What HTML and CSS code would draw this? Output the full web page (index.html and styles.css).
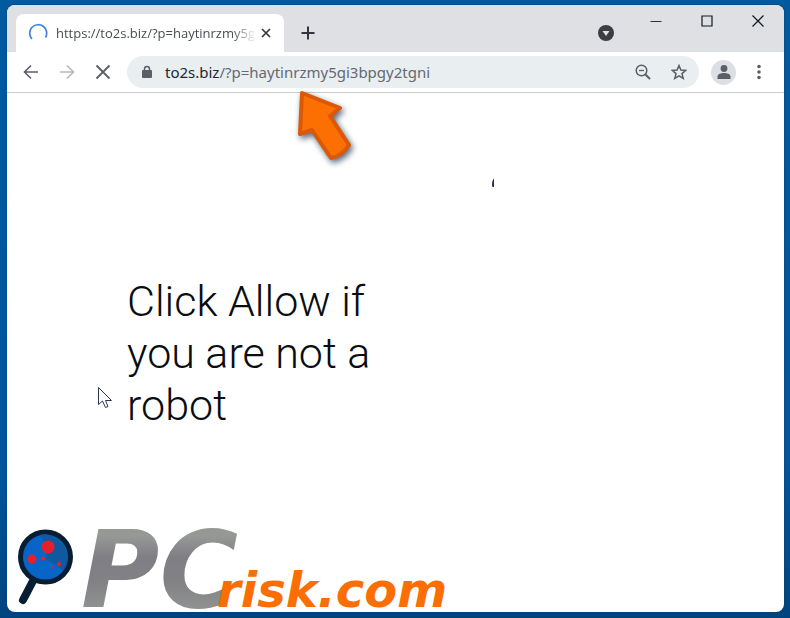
FILE: index.html
```html
<!DOCTYPE html>
<html lang="en">
<head>
<meta charset="utf-8">
<meta name="viewport" content="width=device-width, initial-scale=1">
<title>to2s.biz</title>
<link rel="stylesheet" href="styles.css">
</head>
<body>
<div class="window">
  <header class="tab-strip">
    <div class="tab">
      <svg class="spinner" viewBox="0 0 20 20" width="20" height="20" aria-hidden="true"><path d="M4 16A8.500 8.500 0 1 1 17.500 14.500" fill="none" stroke="#3f83e6" stroke-width="1.700"/></svg>
      <span class="tab-title">https://to2s.biz/?p=haytinrzmy5g</span>
      <button class="icon-button tab-close" aria-label="Close tab"><svg viewBox="0 0 10 10" width="10" height="10"><path d="M1 1L9 9M9 1L1 9" stroke="#35363d" stroke-width="1.700"/></svg></button>
    </div>
    <button class="icon-button new-tab" aria-label="New tab"><svg viewBox="0 0 14 14" width="14" height="14"><path d="M7 .5V13.500M.5 7H13.500" stroke="#35343e" stroke-width="2"/></svg></button>
    <button class="icon-button tab-search" aria-label="Search tabs"><svg viewBox="0 0 16 16" width="16" height="16"><circle cx="8" cy="8" r="8" fill="#3c3d44"/><path d="M4.500 6H11.500L8 11Z" fill="#dee1e6"/></svg></button>
    <div class="window-controls">
      <button class="icon-button" aria-label="Minimize"><svg viewBox="0 0 12 12" width="12" height="12"><path d="M.5 6.500H11.500" stroke="#30323c"/></svg></button>
      <button class="icon-button" aria-label="Maximize"><svg viewBox="0 0 12 12" width="12" height="12"><path d="M1 1H11V11H1Z" fill="none" stroke="#111620" stroke-width="1.200"/></svg></button>
      <button class="icon-button" aria-label="Close"><svg viewBox="0 0 12 12" width="12" height="12"><path d="M.5.5L11.500 11.500M11.500.5L.5 11.500" stroke="#111620" stroke-width="1.200"/></svg></button>
    </div>
  </header>
  <nav class="toolbar" aria-label="Browser">
    <div class="history">
      <button class="icon-button" aria-label="Back"><svg viewBox="0 0 16 16" width="16" height="16"><path d="M15 8H2M8 1.500L1.500 8L8 14.500" fill="none" stroke="#5b5e65" stroke-width="1.600"/></svg></button>
      <button class="icon-button" aria-label="Forward"><svg viewBox="0 0 16 16" width="16" height="16"><path d="M1 8H14M8 1.500L14.500 8L8 14.500" fill="none" stroke="#b8babe" stroke-width="1.600"/></svg></button>
      <button class="icon-button" aria-label="Stop loading"><svg viewBox="0 0 16 16" width="16" height="16"><path d="M1.500 1.500L14.500 14.500M14.500 1.500L1.500 14.500" stroke="#5b5e65" stroke-width="1.800"/></svg></button>
    </div>
    <div class="address">
      <svg viewBox="0 0 12 14" width="12" height="14" aria-hidden="true"><rect x="1" y="5" width="10" height="8" rx="1" fill="#5b5e65"/><path d="M3.500 6V4A2.500 2.500 0 0 1 8.500 4V6" fill="none" stroke="#5b5e65" stroke-width="1.500"/></svg>
      <a class="url" href="#"><span class="host">to2s.biz</span>/?p=haytinrzmy5gi3bpgy2tgni</a>
      <button class="icon-button" aria-label="Zoom"><svg viewBox="0 0 16 16" width="16" height="16"><circle cx="6.500" cy="6.500" r="5.300" fill="none" stroke="#5b5e65" stroke-width="1.500"/><path d="M4 6.500H9" stroke="#5b5e65" stroke-width="1.300"/><path d="M10.200 10.200L15 15" stroke="#5b5e65" stroke-width="2"/></svg></button>
      <button class="icon-button" aria-label="Bookmark this page"><svg viewBox="0 0 16 16" width="16" height="16"><path d="M8 1.500L9.900 6L14.700 6.400L11 9.600L12.200 14.400L8 11.800L3.800 14.400L5 9.600L1.300 6.400L6.100 6Z" fill="none" stroke="#5b5e65" stroke-width="1.500"/></svg></button>
    </div>
    <button class="icon-button profile" aria-label="Profile"><svg viewBox="0 0 14 14" width="14" height="14"><circle cx="7" cy="3.500" r="3.400" fill="#5b5e65"/><path d="M.5 14V11.500C.5 9 4 8 7 8S13.500 9 13.500 11.500V14Z" fill="#5b5e65"/></svg></button>
    <button class="icon-button menu" aria-label="Menu"><svg viewBox="0 0 4 16" width="4" height="16"><g fill="#5b5e65"><circle cx="2" cy="2.500" r="1.800"/><circle cx="2" cy="8" r="1.800"/><circle cx="2" cy="13.500" r="1.800"/></g></svg></button>
  </nav>
  <main class="page">
    <h1 class="prompt">Click Allow if you are not a robot</h1>
    <svg class="fragment" viewBox="0 0 4 10" width="4" height="10" aria-hidden="true"><path d="M3 .5V9H1.500Q0 4 3 .5Z" fill="#252b51"/></svg>
    <svg class="arrow" viewBox="0 0 70 84" width="70" height="84" aria-hidden="true">
      <path d="M7 3L45 18L35 26L54 55Q47 66 36 68L17 40L5 44Z" fill="#fc6f03" stroke="#dc5805" stroke-width="4" stroke-linejoin="round"/>
    </svg>
    <svg class="cursor" viewBox="0 0 16 23" width="16" height="23" aria-hidden="true"><path d="M1.500 1.500V18.500L5.500 15L8.500 21.500L11 20.500L8.500 14.500H14.500Z" fill="#fff" stroke="#2a3850" stroke-width="1"/></svg>
    <div class="brand">
      <svg class="lens" viewBox="0 0 58 78" width="58" height="78" aria-hidden="true">
        <path d="M17 50L6 71" stroke="#071d31" stroke-width="8" stroke-linecap="round"/>
        <circle cx="28.500" cy="28" r="25" fill="#0765c8" stroke="#071d31" stroke-width="5"/>
        <path d="M22 6A23 23 0 0 1 46 42Q38 34 29 31Q32 15 22 6Z" fill="#1059a1"/>
        <g fill="#e4212b"><circle cx="31" cy="18" r="6.500"/><circle cx="15" cy="30" r="4.500"/><circle cx="26" cy="29.500" r="2"/><circle cx="42" cy="35" r="2"/><circle cx="35" cy="38.500" r="1.200"/></g>
      </svg>
      <svg class="wordmark" viewBox="0 0 380 84" width="380" height="84">
        <defs>
          <linearGradient id="steel" x1="0" y1="0" x2="0" y2="84" gradientUnits="userSpaceOnUse">
            <stop offset=".1" stop-color="#969896"/><stop offset=".35" stop-color="#7f7e84"/><stop offset=".65" stop-color="#828285"/><stop offset="1" stop-color="#929492"/>
          </linearGradient>
        </defs>
        <text class="brand-pc" x="6" y="79" fill="url(#steel)">PC</text>
        <text class="brand-risk" x="142" y="79" fill="#fa6e04">risk.com</text>
      </svg>
    </div>
  </main>
</div>
</body>
</html>
```
FILE: styles.css
```css
* { box-sizing: border-box; }
body {
  margin: 0;
  padding: 5px 6px 6px 7px;
  min-height: 100vh;
  display: flex;
  background: linear-gradient(#005a9f, #00559c 75%, #00447f);
  font-family: "Noto Sans", "Open Sans", sans-serif;
}
.window {
  flex: 1;
  min-width: 0;
  display: flex;
  flex-direction: column;
  border-radius: 8px;
  background: #fff;
  box-shadow: 0 0 2px #17395c;
}
.icon-button {
  display: grid;
  place-items: center;
  flex: none;
  padding: 0;
  border: 0;
  background: none;
}
.tab-strip {
  display: flex;
  align-items: flex-end;
  height: 47px;
  padding-left: 9px;
  border-radius: 8px 8px 0 0;
  background: #dee0e4;
}
.tab {
  display: flex;
  align-items: center;
  width: 268px;
  height: 38px;
  padding: 0 12px;
  border-radius: 8px 8px 0 0;
  background: #fff;
}
.spinner { flex: none; margin-right: 8px; }
.tab-title {
  flex: 1;
  min-width: 0;
  overflow: hidden;
  white-space: nowrap;
  font-family: "Open Sans", sans-serif;
  font-size: 13px;
  line-height: 20px;
  color: #484c53;
  mask-image: linear-gradient(to left, transparent, #000 24px);
}
.tab-close { margin-left: 4px; width: 12px; height: 20px; }
.new-tab { width: 28px; height: 38px; margin-left: 10px; }
.tab-search { width: 28px; height: 38px; margin-left: auto; }
.window-controls {
  display: flex;
  align-self: flex-start;
  margin: 0 1px 0 10px;
}
.window-controls .icon-button { width: 51px; height: 32px; }
.toolbar {
  display: flex;
  align-items: center;
  height: 41px;
  padding: 0 23px 0 16px;
  border-bottom: 1px solid #cbccce;
}
.history { display: flex; gap: 20px; margin-right: 16px; }
.address {
  flex: 1;
  min-width: 0;
  display: flex;
  align-items: center;
  gap: 20px;
  height: 32px;
  padding: 0 12px 0 14px;
  border-radius: 16px;
  background: #e9eef1;
}
.url {
  flex: 1;
  min-width: 0;
  margin-left: -8px;
  overflow: hidden;
  white-space: nowrap;
  font-size: 15px;
  line-height: 24px;
  color: #656971;
  text-decoration: none;
}
.host { color: #202831; }
.profile {
  width: 25px;
  height: 25px;
  margin-left: 12px;
  border-radius: 50%;
  background: #dddfe5;
}
.menu { margin-left: 21px; }
.page {
  position: relative;
  flex: 1;
  display: flex;
  flex-direction: column;
  justify-content: space-between;
  padding: 182px 0 0 120px;
}
.prompt {
  max-width: 260px;
  margin: 0;
  font: 300 43px/52px Roboto, sans-serif;
  color: #080d12;
}
.fragment { position: absolute; left: 484px; top: 85px; }
.arrow {
  position: absolute;
  left: 288px;
  top: -3px;
  filter: drop-shadow(2px 3px 3px #56687f);
}
.cursor { position: absolute; left: 90px; top: 293px; }
.brand {
  display: flex;
  align-items: flex-end;
  margin-left: -110px;
}
.lens { flex: none; margin-bottom: 5px; }
.wordmark {
  flex: none;
  font-family: "DejaVu Sans", sans-serif;
  font-style: oblique;
  font-weight: 700;
}
.brand-pc { font-size: 107px; }
.brand-risk { font-size: 48px; }
```
